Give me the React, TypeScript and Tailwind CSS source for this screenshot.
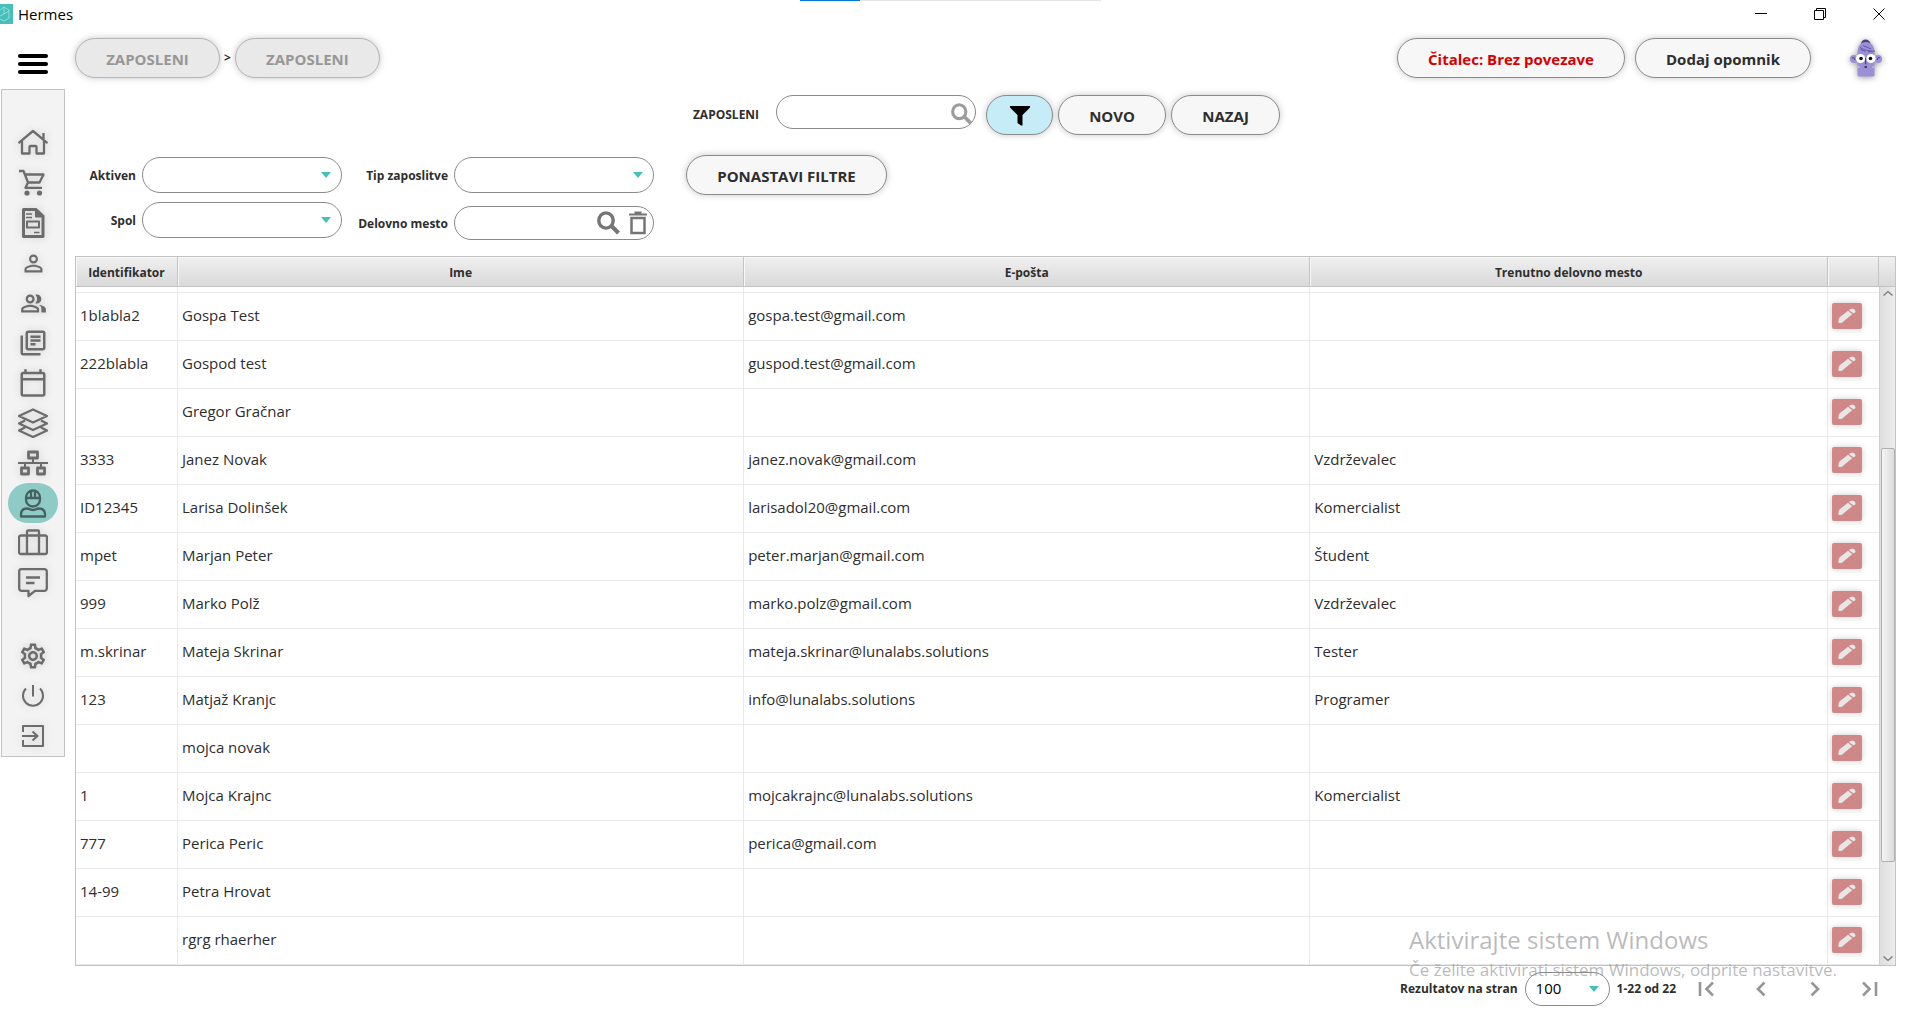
import React from "react";
import {
  MdPersonOutline,
  MdOutlinePeopleAlt,
  MdOutlineLibraryBooks,
  MdOutlineCalendarToday,
  MdOutlineSettings,
} from "react-icons/md";

type Employee = { id: string; name: string; email: string; job: string };

const employees: Employee[] = [
  { id: "1blabla2", name: "Gospa Test", email: "gospa.test@gmail.com", job: "" },
  { id: "222blabla", name: "Gospod test", email: "guspod.test@gmail.com", job: "" },
  { id: "", name: "Gregor Gračnar", email: "", job: "" },
  { id: "3333", name: "Janez Novak", email: "janez.novak@gmail.com", job: "Vzdrževalec" },
  { id: "ID12345", name: "Larisa Dolinšek", email: "larisadol20@gmail.com", job: "Komercialist" },
  { id: "mpet", name: "Marjan Peter", email: "peter.marjan@gmail.com", job: "Študent" },
  { id: "999", name: "Marko Polž", email: "marko.polz@gmail.com", job: "Vzdrževalec" },
  { id: "m.skrinar", name: "Mateja Skrinar", email: "mateja.skrinar@lunalabs.solutions", job: "Tester" },
  { id: "123", name: "Matjaž Kranjc", email: "info@lunalabs.solutions", job: "Programer" },
  { id: "", name: "mojca novak", email: "", job: "" },
  { id: "1", name: "Mojca Krajnc", email: "mojcakrajnc@lunalabs.solutions", job: "Komercialist" },
  { id: "777", name: "Perica Peric", email: "perica@gmail.com", job: "" },
  { id: "14-99", name: "Petra Hrovat", email: "", job: "" },
  { id: "", name: "rgrg rhaerher", email: "", job: "" },
];

function Glyph({ children, width = 2.3 }: { children: React.ReactNode; width?: number }) {
  return (
    <svg viewBox="0 0 30 30" className="size-[30px]" fill="none" stroke="currentColor" strokeWidth={width} strokeLinejoin="round" aria-hidden="true">
      {children}
    </svg>
  );
}

const mainNav = [
  {
    label: "Domov",
    icon: (
      <Glyph>
        <path d="M.5 15 15 3l14.500 12M25.500 5v7M4 13v12.500h7.500V19a1 1 0 0 1 1-1h5a1 1 0 0 1 1 1v6.500H26V13" />
      </Glyph>
    ),
  },
  {
    label: "Nakup",
    icon: (
      <Glyph>
        <path d="M1 3h4.500l4.500 11.500h11.500L25.500 6.500H7M10 14.500l-2.500 5.300H24" />
        <circle cx="9" cy="25" r="2.600" fill="currentColor" stroke="none" />
        <circle cx="21.500" cy="25" r="2.600" fill="currentColor" stroke="none" />
      </Glyph>
    ),
  },
  {
    label: "Dokumenti",
    icon: (
      <Glyph>
        <path d="M5.500 1.500H18L25 8v20.500H5.500Z" strokeWidth="3" />
        <path d="M17.500 2v7H25Z" fill="currentColor" strokeWidth="1" />
        <path d="M8 6h6M8 9.500h6M16 24.500h5.500" strokeWidth="1.600" />
        <path d="M9 13.500h12v6H9Z" strokeWidth="2" />
      </Glyph>
    ),
  },
  { label: "Oseba", icon: <MdPersonOutline size={27} /> },
  { label: "Skupine", icon: <MdOutlinePeopleAlt size={27} /> },
  { label: "Knjižnica", icon: <MdOutlineLibraryBooks size={30} /> },
  { label: "Koledar", icon: <MdOutlineCalendarToday size={30} /> },
  {
    label: "Sloji",
    icon: (
      <Glyph>
        <path d="M15 1.500 29 8l-14 6.500L1 8ZM7 12.500l-6 3 14 6.500 14-6.500-6-3M7 19.500l-6 3L15 29l14-6.500-6-3" />
      </Glyph>
    ),
  },
  {
    label: "Omrežje",
    icon: (
      <Glyph width={2.8}>
        <path d="M10.500 4h9v6h-9ZM3.500 20h7v6h-7ZM19.500 20h7v6h-7Z" />
        <path d="M15 10v5M0 15h30M7 15v5M23 15v5" strokeWidth="2" />
      </Glyph>
    ),
  },
  {
    label: "Zaposleni",
    active: true,
    icon: (
      <Glyph>
        <path d="M8 9.500a7 7 0 0 1 14 0v2a7 7 0 0 1-14 0ZM7 10h16M13 3v6M17 3v6" />
        <path d="M3 28.500v-2c0-4 2.500-6 6-6 2.500 0 4 1.500 6 1.500s3.500-1.500 6-1.500c3.500 0 6 2 6 6v2Z" />
      </Glyph>
    ),
  },
  {
    label: "Kovček",
    icon: (
      <Glyph>
        <path d="M3 7.500h24a2 2 0 0 1 2 2v14.500a2 2 0 0 1-2 2H3a2 2 0 0 1-2-2V9.500a2 2 0 0 1 2-2ZM9 26V3.500a1 1 0 0 1 1-1h10a1 1 0 0 1 1 1V26" />
      </Glyph>
    ),
  },
  {
    label: "Sporočila",
    icon: (
      <Glyph>
        <path d="M3.500 1.200h23a2.300 2.300 0 0 1 2.300 2.300v17a2.300 2.300 0 0 1-2.300 2.300H17l-6.500 5.200v-5.200h-7a2.300 2.300 0 0 1-2.300-2.300v-17a2.300 2.300 0 0 1 2.300-2.300ZM8 9.500h14M8 15h8.500" />
      </Glyph>
    ),
  },
];

const footNav = [
  { label: "Nastavitve", icon: <MdOutlineSettings size={30} /> },
  {
    label: "Izklop",
    icon: (
      <Glyph width={2}>
        <path d="M15 4v11.500M8 7.500a10 10 0 1 0 14 0" />
      </Glyph>
    ),
  },
  {
    label: "Odjava",
    icon: (
      <Glyph width={2}>
        <path d="M5 11V5h20v20H5v-6M4 15h15M14.500 10.500 19.500 15l-5 4.500" />
      </Glyph>
    ),
  },
];

function NavButton({ label, icon, active }: { label: string; icon: React.ReactNode; active?: boolean }) {
  return (
    <button
      type="button"
      aria-label={label}
      className={
        active
          ? "flex h-10 w-[50px] items-center justify-center rounded-full bg-[#8ecac6] text-[#46615f]"
          : "flex h-10 w-[50px] items-center justify-center text-[#6c6c6c] drop-shadow-[0_0_4px_rgba(0,0,0,0.15)]"
      }
    >
      {icon}
    </button>
  );
}

function Pill({ children, className = "" }: { children: React.ReactNode; className?: string }) {
  return (
    <button
      type="button"
      className={`flex h-10 shrink-0 items-center justify-center rounded-[20px] border border-[#8a8a8a] pt-0.5 text-[15px] font-bold shadow-[0_0_7px_rgba(0,0,0,0.22)] ${className}`}
    >
      {children}
    </button>
  );
}

function Caret() {
  return (
    <svg viewBox="0 0 10 6" className="pointer-events-none absolute right-[11px] h-1.5 w-2.5" aria-hidden="true">
      <path d="M0 0h10L5 6Z" fill="#45bfb9" />
    </svg>
  );
}

function SelectField({ id, label }: { id: string; label: string }) {
  return (
    <>
      <label htmlFor={id} className="text-right text-xs leading-[38px] font-bold whitespace-nowrap h-9">
        {label}
      </label>
      <div className="relative flex items-center">
        <select id={id} className="h-9 w-full appearance-none rounded-[18px] border border-[#8a8a8a] bg-white px-3">
          <option></option>
        </select>
        <Caret />
      </div>
    </>
  );
}

function Magnifier({ className }: { className: string }) {
  return (
    <svg viewBox="0 0 24 24" className={className} fill="none" stroke="currentColor" aria-hidden="true">
      <ellipse cx="9" cy="9.500" rx="7.200" ry="7.600" strokeWidth="3.400" />
      <path d="m14.500 15 7 7" strokeWidth="4" />
    </svg>
  );
}

function Avatar() {
  return (
    <svg viewBox="0 0 32 38" className="h-[38px] w-8 drop-shadow-[0_1px_3px_rgba(0,0,0,0.4)]" aria-label="Uporabnik">
      <path d="M11 5c0-6 9-6 9.500 0Z" fill="#4b3f83" />
      <circle cx="4" cy="20" r="4" fill="#9b8fd6" />
      <circle cx="28" cy="20" r="4" fill="#9b8fd6" />
      <path d="M2 19q2-2 3 2M30 19q-2-2-3 2" fill="none" stroke="#4b3f83" />
      <path d="M7.500 14c0-7 3-11 8.500-11s8.500 4 8.500 11v22q0 1.500-2 1.500h-13Q7.500 37.500 7.500 36Z" fill="#9b8fd6" />
      <path d="M10 8.500c3 2 6 3 12 3.500M10.500 10.500l5 2M13 6.500l8 3.500M18 13l7-1" fill="none" stroke="#5d51a0" strokeWidth=".9" />
      <circle cx="10.500" cy="19.500" r="4.600" fill="#fff" />
      <circle cx="21" cy="19.500" r="4.600" fill="#fff" />
      <circle cx="11" cy="19.500" r="1.800" fill="#111" />
      <circle cx="20.500" cy="19.500" r="1.800" fill="#111" />
      <path d="M15.500 19v6h1" fill="none" stroke="#4b3f83" />
      <path d="M14.500 28h2.500" stroke="#222" strokeWidth="1.500" />
      <path d="M8 27l1.500 2M24 27l-1.500 2" stroke="#d9d3f2" />
    </svg>
  );
}

function EditButton({ name }: { name: string }) {
  return (
    <button
      type="button"
      aria-label={`Uredi ${name}`}
      className="flex h-[26px] w-[30px] items-center justify-center rounded-[2px] bg-[#d08787] shadow-[0_0_6px_rgba(0,0,0,0.2)]"
    >
      <svg viewBox="0 0 18 16" className="h-4 w-[18px]" fill="#e6e6e6" aria-hidden="true">
        <path d="M.5 15v-3q0-1.500 1.200-2.700L10 2.800l4.200 3.400L6 13q-1.700 1.800-3 2ZM11 2.200C12.500.6 15 .5 16.500 1.600s1.500 3-.8 4Z" />
      </svg>
    </button>
  );
}

function PagerButton({ label, d }: { label: string; d: string }) {
  return (
    <button type="button" aria-label={label} className="flex h-8 w-[22px] items-center justify-center text-[#969696]">
      <svg viewBox="0 0 18 16" className="h-4 w-[18px]" fill="none" stroke="currentColor" strokeWidth="2.600" aria-hidden="true">
        <path d={d} />
      </svg>
    </button>
  );
}

const headCell =
  "border-r border-b border-[#c3c3c3] bg-linear-to-b from-[#f0f0f0] to-[#d9d9d9] pt-0.5 text-xs font-bold text-center shadow-[inset_1px_1px_0_#f8f8f8]";
const bodyCell = "border-r border-b border-[#e9e9e9] px-1 pb-[3px]";

export default function App() {
  return (
    <div className="relative flex min-h-screen flex-col overflow-hidden bg-white font-['Open_Sans',sans-serif] text-[#2e2e2e]">
      <div className="absolute top-0 left-1/2 flex h-px w-[301px] -translate-x-[156px] bg-[#e5e5e5]">
        <span className="h-px w-[60px] bg-[#0078d7]" />
      </div>

      <header className="flex h-7 items-center justify-between pr-[26px] text-black">
        <div className="flex items-center gap-[5px]">
          <svg viewBox="0 0 13 20" className="h-5 w-[13px]" aria-hidden="true">
            <path d="M0 0h13v20H0Z" fill="#45bfb9" />
            <path d="M0 6l4-3 5 3v8l-5 3-4-2M4 3v7l-4 2M4 10l5-3" fill="none" stroke="#a9e2df" strokeWidth=".8" />
          </svg>
          <span className="text-[15px]">Hermes</span>
        </div>
        <div className="flex items-center gap-[47px]">
          <button type="button" aria-label="Minimiraj">
            <svg viewBox="0 0 12 12" className="size-3" stroke="#000"><path d="M0 5.500h12" /></svg>
          </button>
          <button type="button" aria-label="Obnovi">
            <svg viewBox="0 0 12 12" className="size-3" fill="none" stroke="#000"><path d="M.5 2.500h9v9h-9ZM2.500 2.500v-2h9v9h-2" /></svg>
          </button>
          <button type="button" aria-label="Zapri">
            <svg viewBox="0 0 12 12" className="size-3" stroke="#000"><path d="m.5.500 11 11M11.500.500l-11 11" /></svg>
          </button>
        </div>
      </header>

      <div className="flex flex-1">
        <aside className="flex w-[65px] shrink-0 flex-col pl-px">
          <button type="button" aria-label="Meni" className="mt-[26px] mb-[15px] ml-[17px] flex h-5 w-[30px] flex-col justify-between">
            <span className="h-1 w-full rounded-full bg-black" />
            <span className="h-1 w-full rounded-full bg-black" />
            <span className="h-1 w-full rounded-full bg-black" />
          </button>
          <nav className="flex flex-col items-center border border-[#c3c3c3] bg-[#f3f3f3] pt-[33px]">
            {mainNav.map((n) => (
              <NavButton key={n.label} {...n} />
            ))}
            <div className="mt-[33px]">
              {footNav.map((n) => (
                <NavButton key={n.label} {...n} />
              ))}
            </div>
          </nav>
        </aside>

        <main className="flex min-w-0 flex-1 flex-col pt-2.5 pr-[15px] pl-2.5">
          <div className="flex items-center justify-between">
            <nav className="flex items-center gap-1 text-xs font-bold" aria-label="Pot">
              <Pill className="w-[145px] border-[#b5b5b5]! bg-[#e9e9e9] text-[#979797]">ZAPOSLENI</Pill>
              <span>&gt;</span>
              <Pill className="w-[145px] border-[#b5b5b5]! bg-[#e9e9e9] text-[#979797]">ZAPOSLENI</Pill>
            </nav>
            <div className="flex items-center gap-2.5 pr-3.5">
              <Pill className="w-[228px] bg-[#f7f7f7] text-[#d90000]">Čitalec: Brez povezave</Pill>
              <Pill className="w-[176px] bg-[#f7f7f7]">Dodaj opomnik</Pill>
              <span className="ml-[29px]"><Avatar /></span>
            </div>
          </div>

          <div className="mt-[17px] flex items-start justify-center pl-0.5">
            <label htmlFor="search" className="mt-[11px] mr-[17px] text-xs leading-[18px] font-bold">ZAPOSLENI</label>
            <div className="relative flex w-[200px] items-center">
              <input id="search" className="h-[34px] w-full rounded-[17px] border border-[#8a8a8a] bg-white pr-9 pl-3 text-[15px] outline-none" />
              <Magnifier className="absolute top-2 right-[3px] size-[22px] text-[#9c9c9c]" />
            </div>
            <Pill className="ml-2.5 w-[67px] bg-[#c6edf7]">
              <svg viewBox="0 0 20 20" className="size-5" aria-label="Filter">
                <path d="M0 0h20v1.500L12.500 9v10.500h-1.500L7.500 17V9L0 1.500Z" fill="#000" />
              </svg>
            </Pill>
            <Pill className="ml-[5px] w-[108px] bg-[#f7f7f7]">NOVO</Pill>
            <Pill className="ml-[5px] w-[109px] bg-[#f7f7f7]">NAZAJ</Pill>
          </div>

          <div className="mt-5 flex items-start">
            <div className="mt-0.5 grid grid-cols-[61px_200px_100px_200px] items-start gap-x-1.5 gap-y-[9px]">
              <SelectField id="active" label="Aktiven" />
              <SelectField id="type" label="Tip zaposlitve" />
              <SelectField id="gender" label="Spol" />
              <label htmlFor="job" className="mt-1 h-[34px] text-right text-xs leading-9 font-bold whitespace-nowrap">Delovno mesto</label>
              <div className="relative mt-1 flex items-center">
                <input id="job" className="h-[34px] w-full rounded-[17px] border border-[#8a8a8a] bg-white pr-16 pl-3 text-[15px] outline-none" />
                <div className="absolute right-[7px] flex items-center gap-2 text-[#757575]">
                  <button type="button" aria-label="Išči"><Magnifier className="size-6" /></button>
                  <button type="button" aria-label="Počisti">
                    <svg viewBox="0 0 18 24" className="h-6 w-[18px]" fill="none" stroke="currentColor" aria-hidden="true">
                      <path d="M0 3.500h18M5.500 1.500h7" strokeWidth="2" />
                      <path d="M2.500 7h13v15h-13Z" strokeWidth="2.500" />
                    </svg>
                  </button>
                </div>
              </div>
            </div>
            <Pill className="ml-8 w-[201px] bg-[#f7f7f7]">PONASTAVI FILTRE</Pill>
          </div>

          <div className="mt-4 flex border border-[#c3c3c3]">
            <table className="flex-1 table-fixed border-separate border-spacing-0">
              <colgroup>
                <col className="w-[102px]" />
                <col className="w-[31.400%]" />
                <col className="w-[31.400%]" />
                <col />
                <col className="w-[51px]" />
              </colgroup>
              <thead>
                <tr className="h-[30px]">
                  <th className={headCell}>Identifikator</th>
                  <th className={headCell}>Ime</th>
                  <th className={headCell}>E-pošta</th>
                  <th className={headCell}>Trenutno delovno mesto</th>
                  <th className={headCell} aria-label="Uredi" />
                </tr>
              </thead>
              <tbody className="text-[15px]">
                <tr className="h-1.5" aria-hidden="true">
                  <td className="border-r border-b border-[#e9e9e9]" />
                  <td className="border-r border-b border-[#e9e9e9]" />
                  <td className="border-r border-b border-[#e9e9e9]" />
                  <td className="border-r border-b border-[#e9e9e9]" />
                  <td className="border-b border-[#e9e9e9]" />
                </tr>
                {employees.map((e) => (
                  <tr key={e.name} className="h-12">
                    <td className={bodyCell}>{e.id}</td>
                    <td className={bodyCell}>{e.name}</td>
                    <td className={bodyCell}>{e.email}</td>
                    <td className={bodyCell}>{e.job}</td>
                    <td className="border-b border-[#e9e9e9] pb-0.5 pl-1"><EditButton name={e.name} /></td>
                  </tr>
                ))}
              </tbody>
            </table>
            <div className="flex w-4 flex-col bg-[#e6e6e6]">
              <div className="h-[30px] border-b border-[#c3c3c3] bg-linear-to-b from-[#f0f0f0] to-[#d9d9d9]" />
              <div className="flex flex-1 flex-col items-center border-l border-[#cfcfcf] bg-linear-to-r from-[#dedede] to-[#ededed] py-[3px]">
                <svg viewBox="0 0 10 6" className="h-1.5 w-2.5" fill="none" stroke="#777" strokeWidth="1.300"><path d="m.5 5.500 4.500-4 4.500 4" /></svg>
                <div className="flex-[153]" />
                <div className="w-3.5 flex-[414] rounded-[2px] border border-[#b0b0b0] bg-linear-to-r from-[#f4f4f4] to-[#dcdcdc]" />
                <div className="flex-[94]" />
                <svg viewBox="0 0 10 6" className="h-1.5 w-2.5" fill="none" stroke="#777" strokeWidth="1.300"><path d="m.5.500 4.500 4 4.500-4" /></svg>
              </div>
            </div>
          </div>

          <footer className="mt-[6px] flex items-center justify-end pr-4">
            <label htmlFor="pagesize" className="text-xs font-bold">Rezultatov na stran</label>
            <div className="relative mx-[7px] flex w-[85px] items-center">
              <select id="pagesize" className="h-[34px] w-full appearance-none rounded-[17px] border border-[#8a8a8a] bg-white pb-0.5 pl-2.5 text-[15px] text-black">
                <option>100</option>
              </select>
              <Caret />
            </div>
            <span className="text-xs font-bold">1-22 od 22</span>
            <div className="ml-5 flex gap-8">
              <PagerButton label="Prva stran" d="M2 1v14M15 1.500 8.500 8l6.500 6.500" />
              <PagerButton label="Prejšnja stran" d="M12.500 1.500 6 8l6.500 6.500" />
              <PagerButton label="Naslednja stran" d="m5.500 1.500 6.500 6.500-6.500 6.500" />
              <PagerButton label="Zadnja stran" d="M16 1v14M3 1.500 9.500 8 3 14.500" />
            </div>
          </footer>
        </main>
      </div>

      <div className="pointer-events-none absolute right-[74px] bottom-[43px] text-[#8c8c8c]/60">
        <p className="text-2xl leading-8">Aktivirajte sistem Windows</p>
        <p className="text-[17px] leading-7">Če želite aktivirati sistem Windows, odprite nastavitve.</p>
      </div>
    </div>
  );
}
